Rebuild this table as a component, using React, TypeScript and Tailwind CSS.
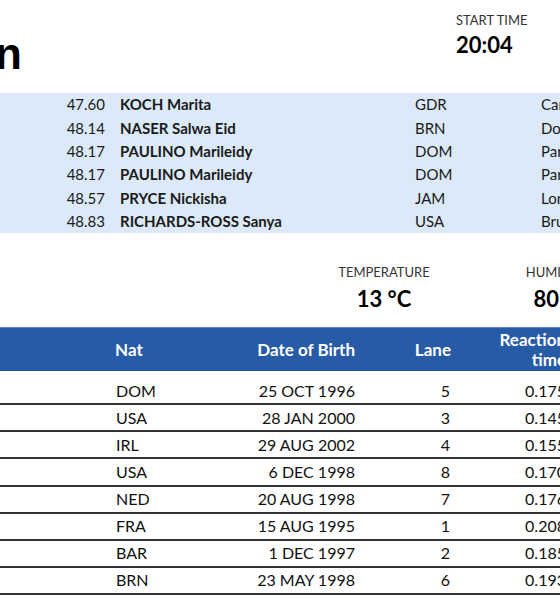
import React from "react";

const records = [
  { mark: "47.60", name: "KOCH Marita", nat: "GDR", venue: "Canberra" },
  { mark: "48.14", name: "NASER Salwa Eid", nat: "BRN", venue: "Doha" },
  { mark: "48.17", name: "PAULINO Marileidy", nat: "DOM", venue: "Paris" },
  { mark: "48.17", name: "PAULINO Marileidy", nat: "DOM", venue: "Paris" },
  { mark: "48.57", name: "PRYCE Nickisha", nat: "JAM", venue: "London" },
  { mark: "48.83", name: "RICHARDS-ROSS Sanya", nat: "USA", venue: "Bruxelles" },
];

const rows = [
  { nat: "DOM", dob: "25 OCT 1996", lane: "5", rt: "0.175" },
  { nat: "USA", dob: "28 JAN 2000", lane: "3", rt: "0.145" },
  { nat: "IRL", dob: "29 AUG 2002", lane: "4", rt: "0.155" },
  { nat: "USA", dob: "6 DEC 1998", lane: "8", rt: "0.170" },
  { nat: "NED", dob: "20 AUG 1998", lane: "7", rt: "0.176" },
  { nat: "FRA", dob: "15 AUG 1995", lane: "1", rt: "0.208" },
  { nat: "BAR", dob: "1 DEC 1997", lane: "2", rt: "0.185" },
  { nat: "BRN", dob: "23 MAY 1998", lane: "6", rt: "0.193" },
];

export default function App() {
  return (
    <div className="w-[560px] h-[600px] overflow-hidden bg-white text-[#111] font-['Lato',sans-serif]">
      <div className="w-[800px]">
        {/* Top */}
        <div className="flex h-[93px]">
          <div className="w-[22px] flex justify-end whitespace-nowrap pt-[32px]">
            <span className="text-[44px] leading-none font-bold font-['Liberation_Sans',Arial,sans-serif] text-black">
              Women
            </span>
          </div>
          <div className="ml-[434px] pt-[14px] flex flex-col">
            <span className="text-[13px] leading-none text-[#333]">START TIME</span>
            <span className="mt-[7px] text-[22px] leading-none font-bold text-black">20:04</span>
          </div>
        </div>

        {/* Records band */}
        <div className="bg-[#dbe9f8] h-[140px] flex flex-col text-[15px] text-[#1a1a1a]">
          {records.map((r, i) => (
            <div key={i} className="grid grid-cols-[105px_310px_126px_200px] h-[23.333px] items-center">
              <div className="text-right">{r.mark}</div>
              <div className="pl-[15px] font-bold whitespace-nowrap">{r.name}</div>
              <div>{r.nat}</div>
              <div>{r.venue}</div>
            </div>
          ))}
        </div>

        {/* Conditions */}
        <div className="flex h-[94px] pt-[33px]">
          <div className="ml-[297px] w-[174px] flex flex-col items-center">
            <span className="text-[13px] leading-none text-[#333]">TEMPERATURE</span>
            <span className="mt-[9px] text-[22px] leading-none font-bold text-black">13 °C</span>
          </div>
          <div className="w-[174px] flex flex-col items-center">
            <span className="text-[13px] leading-none text-[#333]">HUMIDITY</span>
            <span className="mt-[9px] text-[22px] leading-none font-bold text-black">80 %</span>
          </div>
        </div>

        {/* Table header */}
        <div className="grid grid-cols-[115px_120px_120px_96px_115px] h-[44px] bg-[#285ba6] text-white font-bold text-[17px] items-center border-t border-[#5a82c0]">
          <div></div>
          <div className="text-left">Nat</div>
          <div className="text-right">Date of Birth</div>
          <div className="text-right">Lane</div>
          <div className="text-right leading-[20px]">
            Reaction
            <br />
            time
          </div>
        </div>

        {/* Rows */}
        <div className="mt-[7px] text-[16px]">
          {rows.map((r, i) => (
            <div
              key={i}
              className="grid grid-cols-[116px_119px_120px_95px_116px] h-[27.14px] items-center border-b-2 border-[#333]"
            >
              <div></div>
              <div>{r.nat}</div>
              <div className="text-right">{r.dob}</div>
              <div className="text-right">{r.lane}</div>
              <div className="text-right">{r.rt}</div>
            </div>
          ))}
        </div>
      </div>
    </div>
  );
}
